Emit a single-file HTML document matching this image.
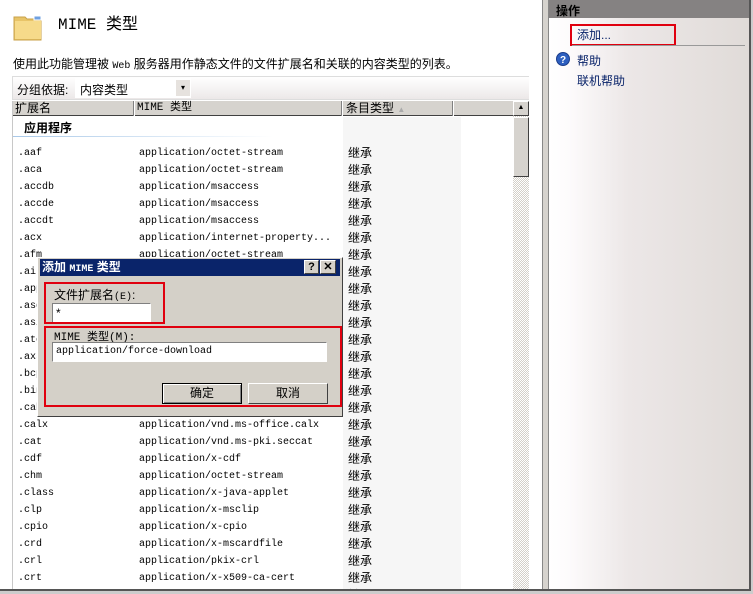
<!DOCTYPE html>
<html><head><meta charset="utf-8"><style>
*{margin:0;padding:0;box-sizing:border-box}
body{width:753px;height:594px;position:relative;overflow:hidden;background:#fff;font-family:"Liberation Sans","Noto Sans CJK SC",sans-serif;font-size:12px;color:#000}
.a{position:absolute}
.m{font-family:"Liberation Mono","Noto Sans CJK SC",monospace;font-size:10px}
.row{position:absolute;left:5px;height:17px;line-height:17px;white-space:nowrap}
.row span{position:absolute;top:0}
</style></head><body>
<svg class="a" style="left:13px;top:13px" width="30" height="28"><path d="M1 4h11l2 2h14v21H1z" fill="#e8c468" stroke="#c9a24a"/><rect x="2" y="8" width="26" height="18" fill="#f6da8a"/><rect x="21" y="3" width="7" height="4" fill="#6fa0e0" stroke="#fff"/></svg>
<div class="a" style="left:58px;top:10px;font-size:16px;font-family:'Liberation Mono','Noto Sans CJK SC',monospace">MIME 类型</div>
<div class="a" style="left:13px;top:55px;font-size:12px">使用此功能管理被 <span class="m">Web</span> 服务器用作静态文件的文件扩展名和关联的内容类型的列表。</div>
<div class="a" style="left:12px;top:76px;width:518px;height:24px;background:linear-gradient(#fff,#ece8e8);border:1px solid #ddd"></div>
<div class="a" style="left:17px;top:81px">分组依据:</div>
<div class="a" style="left:75px;top:78px;width:116px;height:20px;background:#fff"></div>
<div class="a" style="left:80px;top:81px">内容类型</div>
<div class="a" style="left:176px;top:80px;width:14px;height:16px;background:#e6e2de;font-size:8px;text-align:center;line-height:16px">▾</div>
<div class="a" style="left:12px;top:101px;width:501px;height:15px;background:#d6d3ce;border-bottom:1px solid #404040"></div>
<div class="a" style="left:133px;top:101px;width:2px;height:15px;background:#808080;border-right:1px solid #fff"></div>
<div class="a" style="left:341px;top:101px;width:2px;height:15px;background:#808080;border-right:1px solid #fff"></div>
<div class="a" style="left:452px;top:101px;width:2px;height:15px;background:#808080;border-right:1px solid #fff"></div>
<div class="a" style="left:15px;top:101px;line-height:15px">扩展名</div>
<div class="a m" style="left:137px;top:101px;line-height:15px;font-size:11px">MIME 类型</div>
<div class="a" style="left:346px;top:101px;line-height:15px">条目类型 <span style="color:#aaa;font-size:8px">▲</span></div>
<div class="a" style="left:343px;top:117px;width:118px;height:472px;background:#f6f6f6"></div>
<div class="a" style="left:12px;top:101px;width:1px;height:488px;background:#c8c8c8"></div>
<div class="a" style="left:24px;top:119px;font-weight:bold;font-size:12px">应用程序</div>
<div class="a" style="left:13px;top:136px;width:260px;height:1px;background:linear-gradient(90deg,#a8c8e8,#fff)"></div>
<div class="a" style="left:513px;top:101px;width:16px;height:488px;background:repeating-conic-gradient(#d4d0c8 0 25%,#fff 0 50%) 0 0/2px 2px"></div>
<div class="a" style="left:513px;top:101px;width:16px;height:15px;background:#d6d3ce;border:1px solid;border-color:#fff #404040 #404040 #fff;font-size:7px;text-align:center;line-height:12px">▲</div>
<div class="a" style="left:513px;top:117px;width:16px;height:60px;background:#d6d3ce;border:1px solid;border-color:#fff #404040 #404040 #fff"></div>
<div class="a" style="left:529px;top:0;width:1px;height:589px;background:#fff"></div>
<div id="rows" class="a" style="left:13px;top:0;width:500px;height:589px;overflow:hidden"></div>
<div class="a" style="left:542px;top:0;width:7px;height:589px;background:#d6d3ce;border-left:1px solid #888;border-right:1px solid #888"></div>
<div class="a" style="left:549px;top:0;width:200px;height:589px;background:linear-gradient(90deg,#fff 0,#fdfbfc 10%,#ece7e7 40%,#e0dbd8 100%)"></div>
<div class="a" style="left:549px;top:0;width:200px;height:18px;background:#858282"></div>
<div class="a" style="left:556px;top:2px;font-weight:bold;color:#000">操作</div>
<div class="a" style="left:577px;top:26px;color:#0a246a">添加...</div>
<div class="a" style="left:570px;top:24px;width:106px;height:22px;border:2px solid #e0000f"></div>
<div class="a" style="left:572px;top:45px;width:173px;height:1px;background:#999"></div>
<svg class="a" style="left:556px;top:52px" width="14" height="14"><circle cx="7" cy="7" r="6.5" fill="#2d5fc0" stroke="#1a3c8a"/><text x="7" y="11" font-size="10" font-weight="bold" fill="#fff" text-anchor="middle" font-family="Liberation Sans">?</text></svg>
<div class="a" style="left:577px;top:52px;color:#0a246a">帮助</div>
<div class="a" style="left:577px;top:72px;color:#0a246a">联机帮助</div>
<div class="a" style="left:749px;top:0;width:2px;height:591px;background:#555"></div>
<div class="a" style="left:0;top:589px;width:751px;height:2px;background:#555"></div>
<div class="a" style="left:0;top:591px;width:753px;height:3px;background:#ccc"></div>
<div class="a" style="left:751px;top:0;width:2px;height:594px;background:#ccc"></div>
<div class="a" style="left:37px;top:257px;width:306px;height:160px;background:#d4d0c8;border:1px solid;border-color:#fff #404040 #404040 #fff"></div>
<div class="a" style="left:40px;top:259px;width:300px;height:17px;background:#0a246a"></div>
<div class="a" style="left:42px;top:259px;color:#fff;font-weight:bold;line-height:17px">添加 <span class="m" style="font-weight:bold">MIME</span> 类型</div>
<div class="a" style="left:304px;top:260px;width:15px;height:14px;background:#d4d0c8;border:1px solid;border-color:#fff #404040 #404040 #fff;font-weight:bold;font-size:11px;text-align:center;line-height:12px">?</div>
<div class="a" style="left:320px;top:260px;width:16px;height:14px;background:#d4d0c8;border:1px solid;border-color:#fff #404040 #404040 #fff;font-weight:bold;font-size:11px;text-align:center;line-height:12px">✕</div>
<div class="a" style="left:54px;top:286px">文件扩展名<span class="m">(E)</span>:</div>
<div class="a" style="left:52px;top:303px;width:99px;height:20px;background:#fff;border:1px solid;border-color:#808080 #fff #fff #808080;padding-left:3px;line-height:18px">*</div>
<div class="a" style="left:44px;top:282px;width:121px;height:42px;border:2px solid #e0000f"></div>
<div class="a m" style="left:54px;top:328px;font-size:11px">MIME 类型(M):</div>
<div class="a m" style="left:52px;top:342px;width:275px;height:20px;background:#fff;border:1px solid;border-color:#808080 #fff #fff #808080;padding-left:3px;line-height:18px">application/force-download</div>
<div class="a" style="left:162px;top:383px;width:80px;height:21px;background:#d4d0c8;border:1px solid #000;box-shadow:inset 1px 1px #fff,inset -1px -1px #808080;text-align:center;line-height:19px">确定</div>
<div class="a" style="left:248px;top:383px;width:80px;height:21px;background:#d4d0c8;border:1px solid;border-color:#fff #404040 #404040 #fff;text-align:center;line-height:19px">取消</div>
<div class="a" style="left:44px;top:326px;width:298px;height:81px;border:2px solid #e0000f"></div>
<script>
var d=[["aaf","octet-stream"],["aca","octet-stream"],["accdb","msaccess"],["accde","msaccess"],["accdt","msaccess"],["acx","internet-property..."],["afm","octet-stream"],["ai","postscript"],["application","x-ms-application"],["asd","octet-stream"],["asi","octet-stream"],["atom","atom+xml"],["axs","olescript"],["bcpio","x-bcpio"],["bin","octet-stream"],["cab","octet-stream"],["calx","vnd.ms-office.calx"],["cat","vnd.ms-pki.seccat"],["cdf","x-cdf"],["chm","octet-stream"],["class","x-java-applet"],["clp","x-msclip"],["cpio","x-cpio"],["crd","x-mscardfile"],["crl","pkix-crl"],["crt","x-x509-ca-cert"],["csh","x-csh"]];
var h="";d.forEach(function(r,i){var y=145+i*17;h+='<div class="row" style="top:'+y+'px"><span class="m" style="left:0">.'+r[0]+'</span><span class="m" style="left:121px">application/'+r[1]+'</span><span style="left:330px">继承</span></div>';});
document.getElementById("rows").innerHTML=h;
</script>
</body></html>
